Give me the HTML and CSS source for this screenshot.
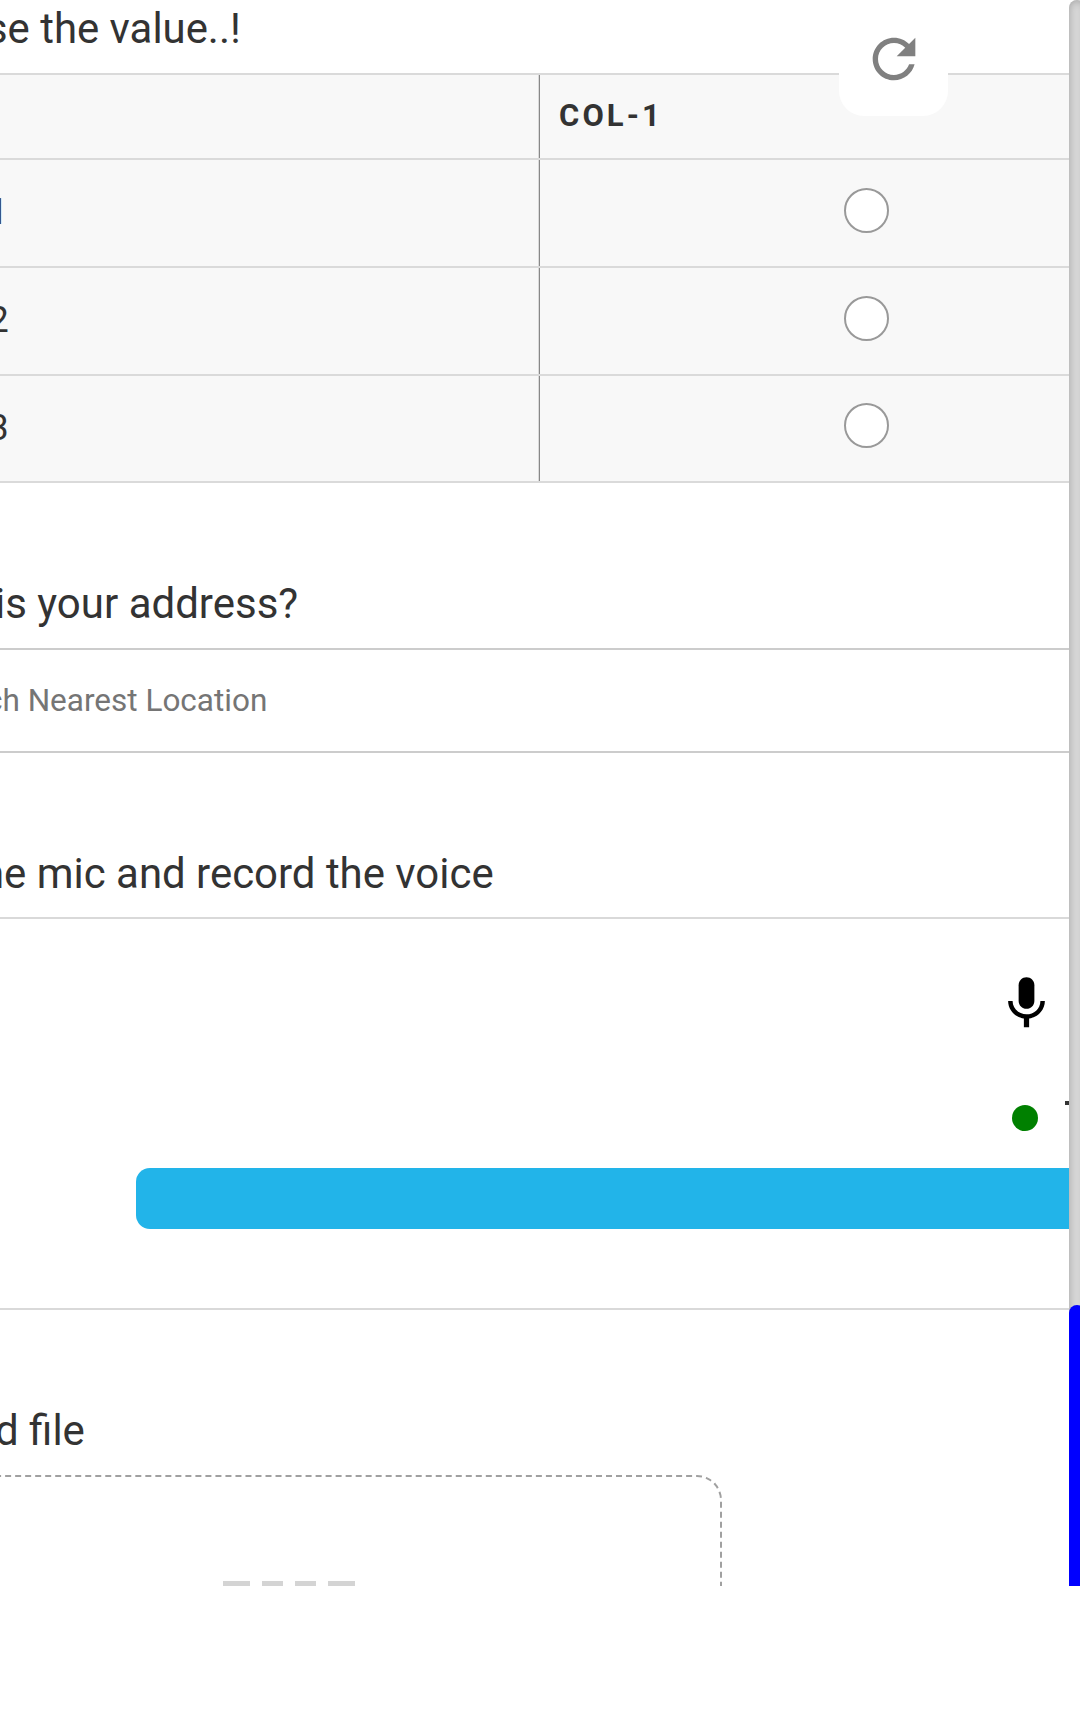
FILE: index.html
```html
<!DOCTYPE html>
<html lang="en">
<head>
<meta charset="utf-8">
<title>Form</title>
<link rel="stylesheet" href="styles.css">
</head>
<body>
<div class="viewport">
  <main class="form">
    <section class="matrix">
      <h2 class="question q-value">se the value..!</h2>
      <div class="grid">
        <div class="row head"><span class="label"></span><span class="cell title">COL-1</span></div>
        <div class="row"><span class="label l1">1</span><span class="cell"><i class="radio"></i></span></div>
        <div class="row"><span class="label l2">2</span><span class="cell"><i class="radio"></i></span></div>
        <div class="row last"><span class="label l3">3</span><span class="cell"><i class="radio"></i></span></div>
      </div>
    </section>
    <section class="address">
      <h2 class="question q-address">is your address?</h2>
      <div class="search"><span>ch Nearest Location</span></div>
    </section>
    <section class="voice">
      <h2 class="question q-voice">he mic and record the voice</h2>
      <div class="recorder">
        <svg class="mic" viewBox="0 0 24 24"><path d="M12 14c1.66 0 3-1.34 3-3V5c0-1.66-1.34-3-3-3S9 3.340 9 5v6c0 1.660 1.340 3 3 3z"/><path d="M17.300 11c0 3-2.540 5.100-5.300 5.100S6.700 14 6.700 11H5c0 3.410 2.720 6.230 6 6.720V21h2v-3.280c3.280-.480 6-3.300 6-6.720h-1.700z"/></svg>
        <div class="status"><i class="dot"></i><i class="dash"></i></div>
        <div class="bar"></div>
      </div>
    </section>
    <section class="upload">
      <h2 class="question q-file">d file</h2>
      <div class="drop"><i class="long"></i><i></i><i></i><i class="long"></i></div>
    </section>
  </main>
  <div class="track"><div class="thumb"></div></div>
  <div class="refresh"><svg viewBox="0 0 24 24"><path d="M17.650 6.350C16.200 4.900 14.210 4 12 4c-4.420 0-7.990 3.580-7.990 8s3.570 8 7.990 8c3.730 0 6.840-2.550 7.730-6h-2.080c-.820 2.330-3.040 4-5.650 4-3.310 0-6-2.690-6-6s2.690-6 6-6c1.660 0 3.140.690 4.220 1.780L13 11h7V4l-2.350 2.350z"/></svg></div>
</div>
</body>
</html>
```
FILE: styles.css
```css
* { box-sizing: border-box; }
body { margin: 0; background: #fff; color: #333; font-family: Roboto, sans-serif; }
.viewport { position: relative; display: flex; height: 1586px; overflow: hidden; }
.form { width: 1069px; flex: none; overflow: hidden; }
.question { margin: 0; font-size: 42px; font-weight: 400; line-height: 50px; white-space: nowrap; }

.matrix { padding-top: 4px; }
.q-value { height: 69px; margin-left: -14px; font-size: 41.9px; }
.grid { border-top: 2px solid #dadada; background: #f8f8f8; }
.row { display: flex; height: 108px; border-bottom: 2px solid #dadada; }
.row.head { height: 85px; }
.row.last { height: 107px; }
.label { width: 539px; border-right: 1px solid #dadada; font-size: 36px; line-height: 104px; }
.l1 { text-indent: -12px; }
.l2 { text-indent: -11.500px; }
.l3 { text-indent: -11.500px; }
.cell { flex: 1; display: flex; align-items: center; padding-left: 304px; border-left: 1px solid #888; }
.title { padding: 0 0 2px 19px; font-size: 31px; font-weight: 700; letter-spacing: 3.100px; }
.radio { width: 45px; height: 45px; margin-bottom: 6px; border: 2px solid #999; border-radius: 50%; background: #fff; }

.address { padding-top: 96px; }
.q-address { height: 69px; margin-left: -5px; }
.search { height: 105px; border: solid #ccc; border-width: 2px 0; font-size: 31.500px; line-height: 101px; color: #757575; white-space: nowrap; }
.search span { margin-left: -14px; }

.voice { padding-top: 96px; }
.q-voice { height: 68px; margin-left: -19px; font-size: 41.950px; }
.recorder { height: 393px; padding-top: 53px; border: solid #d9d9d9; border-width: 2px 0; }
.mic { display: block; width: 63px; height: 63px; margin-left: 995px; }
.status { display: flex; height: 76px; margin-top: 66px; padding-left: 1012px; }
.dot { width: 26px; height: 26px; margin-top: 4px; border-radius: 50%; background: green; }
.dash { width: 4px; height: 4px; margin-left: 27px; background: #333; }
.bar { height: 61px; margin: -9px 0 0 136px; border-radius: 14px 0 0 14px; background: #22b4e9; }

.upload { padding-top: 96px; }
.q-file { height: 69px; margin-left: -5px; }
.drop { display: flex; gap: 12px; width: 822px; height: 240px; margin-left: -100px; padding: 104px 0 0 321px; border: 2px dashed #a0a0a0; border-radius: 25px; }
.drop i { width: 21px; height: 5px; background: #d4d4d4; }
.drop .long { width: 27px; }

.track { width: 16px; flex: none; height: 1686px; padding-top: 1305px; border-radius: 8px; background: #d8d8d8; box-shadow: inset 0 0 8px #a0a0a0; }
.thumb { height: 381px; border-radius: 8px; background: blue; }

.refresh { position: absolute; left: 839px; top: 0; width: 109px; height: 116px; padding: 27px 0 0 23px; border-radius: 0 0 25px 25px; background: #fff; }
.refresh svg { display: block; width: 64px; height: 64px; fill: #808080; }
```
